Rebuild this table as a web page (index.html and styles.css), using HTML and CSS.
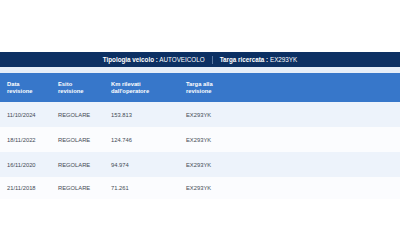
FILE: index.html
```html
<!DOCTYPE html>
<html lang="it">
<head>
  <meta charset="UTF-8">
  <meta name="viewport" content="width=device-width, initial-scale=1.0">
  <title>Revisioni veicolo</title>
  <link rel="stylesheet" href="styles.css">
</head>
<body>
  <div class="summary">
    <span><b>Tipologia veicolo :</b> AUTOVEICOLO</span>
    <span class="sep"></span>
    <span><b>Targa ricercata :</b> EX293YK</span>
  </div>

  <div class="strip"></div>

  <table class="revisioni">
    <colgroup>
      <col class="c-data">
      <col class="c-esito">
      <col class="c-km">
      <col>
    </colgroup>
    <thead>
      <tr>
        <th>Data<br>revisione</th>
        <th>Esito<br>revisione</th>
        <th>Km rilevati<br>dall'operatore</th>
        <th>Targa alla<br>revisione</th>
      </tr>
    </thead>
    <tbody>
      <tr>
        <td>11/10/2024</td>
        <td>REGOLARE</td>
        <td>153.813</td>
        <td>EX293YK</td>
      </tr>
      <tr>
        <td>18/11/2022</td>
        <td>REGOLARE</td>
        <td>124.746</td>
        <td>EX293YK</td>
      </tr>
      <tr>
        <td>16/11/2020</td>
        <td>REGOLARE</td>
        <td>94.974</td>
        <td>EX293YK</td>
      </tr>
      <tr>
        <td>21/11/2018</td>
        <td>REGOLARE</td>
        <td>71.261</td>
        <td>EX293YK</td>
      </tr>
    </tbody>
  </table>
</body>
</html>
```

FILE: styles.css
```css
body {
  font-family: 'Liberation Sans', Arial, sans-serif;
  background: #ffffff;
  color: #333a44;
  margin: 0;
  padding-top: 52px;
}

/* ───────────── barra riepilogo ───────────── */
.summary {
  height: 15px;
  background-color: #0c3063;
  color: #ffffff;
  font-size: 6.3px;
  display: flex;
  align-items: center;
  justify-content: center;
  gap: 7px;
}

.summary b {
  font-weight: bold;
}

.sep {
  width: 1px;
  height: 8px;
  background-color: #5a77a0;
}

.strip {
  height: 6px;
  background-color: #e6eef8;
}

/* ───────────── tabella revisioni ───────────── */
.revisioni {
  width: 100%;
  border-collapse: collapse;
  table-layout: fixed;
  font-size: 5.8px;
}

.c-data { width: 51px; }
.c-esito { width: 53px; }
.c-km { width: 75px; }

.revisioni th {
  background-color: #3777ca;
  color: #ffffff;
  font-weight: bold;
  text-align: left;
  height: 29px;
  padding: 0 0 0 7px;
  line-height: 7px;
  vertical-align: middle;
}

.revisioni td {
  height: 25px;
  padding: 0 0 0 7px;
  color: #444b55;
  vertical-align: middle;
}

.revisioni tbody tr:nth-child(odd) {
  background-color: #edf3fb;
}

.revisioni tbody tr:nth-child(even) {
  background-color: #fbfcfe;
}

.revisioni tbody tr:last-child td {
  height: 22px;
}
```
